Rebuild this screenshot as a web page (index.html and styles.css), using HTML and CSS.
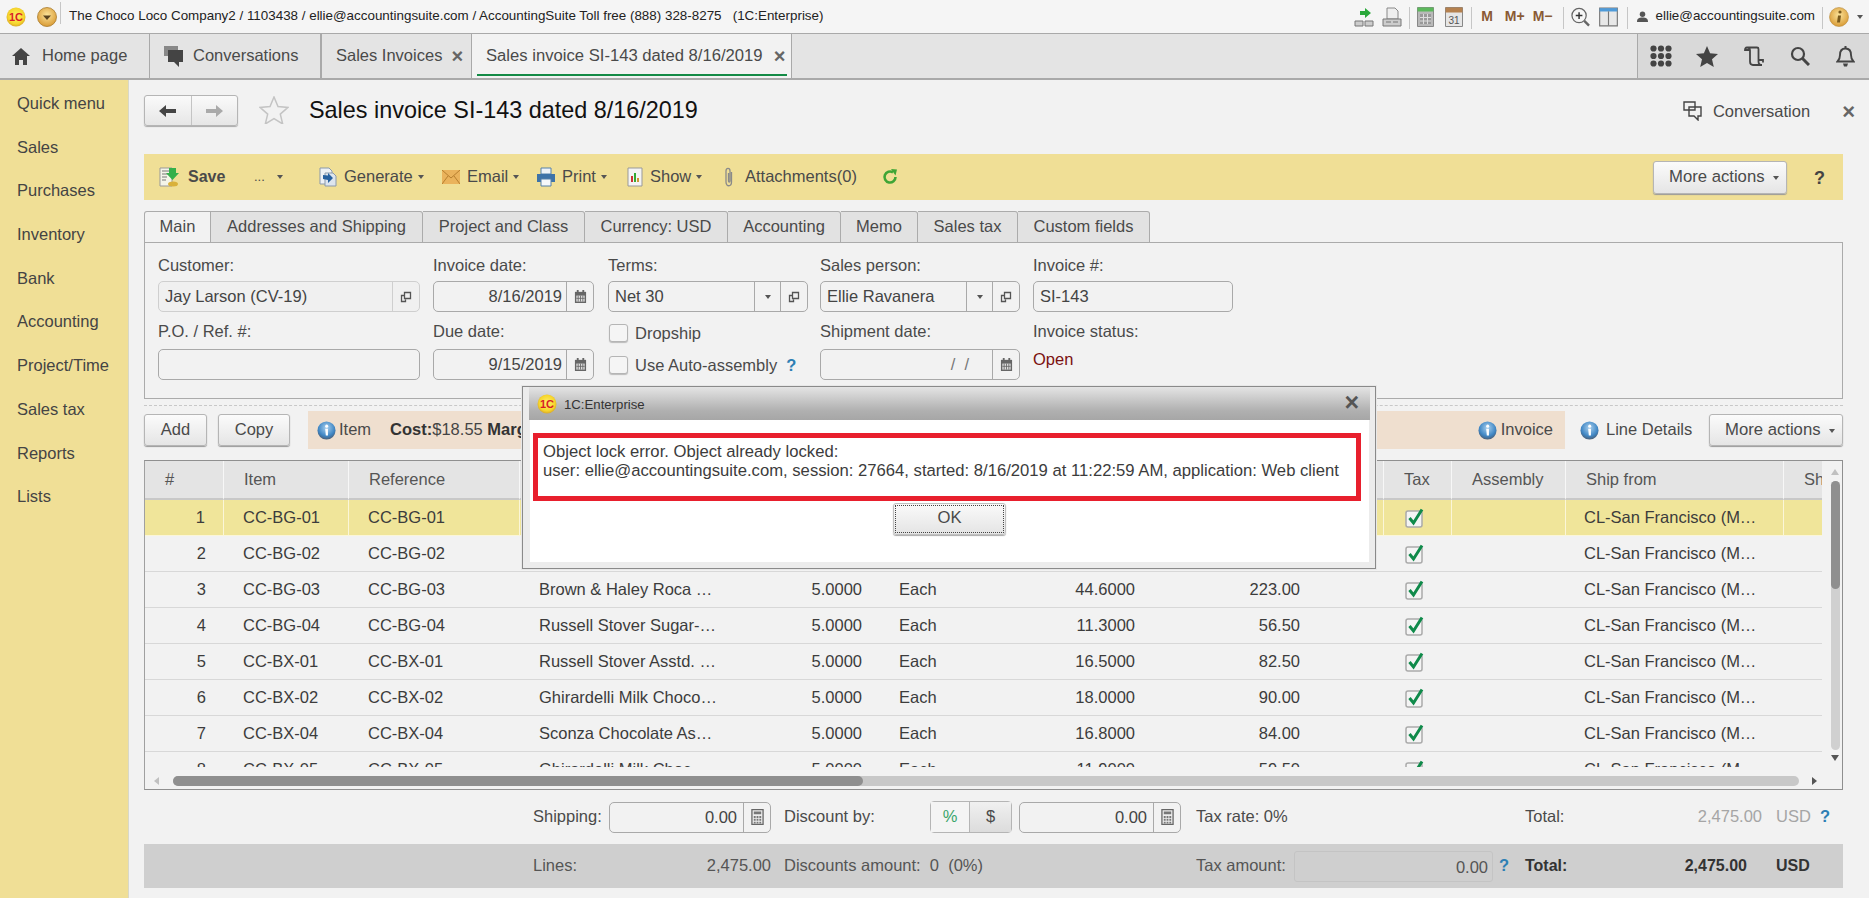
FILE: index.html
```html
<!DOCTYPE html>
<html lang="en">
<head>
<meta charset="utf-8">
<title>Sales invoice SI-143</title>
<link rel="stylesheet" href="styles.css">
</head>
<body>
<svg class="defs" width="0" height="0" aria-hidden="true">
  <defs>
    <radialGradient id="gy" cx="50%" cy="45%" r="55%"><stop offset="0" stop-color="#fff36a"/><stop offset="0.75" stop-color="#f6d52c"/><stop offset="1" stop-color="#d9a92a"/></radialGradient>
    <radialGradient id="gi" cx="50%" cy="35%" r="65%"><stop offset="0" stop-color="#a9d0ee"/><stop offset="0.7" stop-color="#3f86c4"/><stop offset="1" stop-color="#4a5f78"/></radialGradient>
    <radialGradient id="go" cx="50%" cy="40%" r="60%"><stop offset="0" stop-color="#fbe39a"/><stop offset="1" stop-color="#d99b35"/></radialGradient>
    <symbol id="info" viewBox="0 0 20 20"><circle cx="10" cy="10" r="9.5" fill="url(#gi)"/><circle cx="10.2" cy="5.4" r="1.6" fill="#fff"/><path d="M8.6 8.2h2.9v7h-2.2z" fill="#fff"/></symbol>
    <symbol id="ext" viewBox="0 0 12 12"><path d="M4.5 1.5h6v6h-6zM4 4.5H1.5v6h2.2M1.5 10.5h4v-2" fill="none" stroke="#555" stroke-width="1.3"/></symbol>
    <symbol id="cal" viewBox="0 0 14 16"><path d="M1 3h12v12H1z" fill="#666"/><path d="M3 1h2v3H3zM9 1h2v3H9z" fill="#666"/><path d="M2.5 7h9v6.500h-9z" fill="#ddd"/><path d="M4.500 7v6.500M7 7v6.500M9.500 7v6.500M2.500 10h9" stroke="#666" stroke-width=".9"/></symbol>
    <symbol id="calc" viewBox="0 0 14 18"><path d="M1 1h12v16H1z" fill="#eee" stroke="#666" stroke-width="1.400"/><path d="M3 3h8v3H3z" fill="#777"/><path d="M3 8h2v2H3zM6 8h2v2H6zM9 8h2v2H9zM3 11h2v2H3zM6 11h2v2H6zM9 11h2v2H9zM3 14h2v2H3zM6 14h2v2H6zM9 14h2v2H9z" fill="#777"/></symbol>
    <symbol id="chk" viewBox="0 0 20 20"><rect x="1" y="3" width="16" height="16" rx="2" fill="#f4f4f4" stroke="#aaa" stroke-width="1.500"/><path d="M4.500 10l4 5L17 1.500" fill="none" stroke="#0f8a4a" stroke-width="3"/></symbol>
  </defs>
</svg>

<div class="app">
  <header class="topbar">
    <svg class="logo" viewBox="0 0 20 20"><circle cx="10" cy="10" r="9.500" fill="url(#gy)"/><text x="10" y="13.800" class="logo-t">1C</text></svg>
    <svg class="sys" viewBox="0 0 20 20"><circle cx="10" cy="10" r="9.500" fill="url(#go)" stroke="#a97b2c" stroke-width=".8"/><path d="M6 8.500h8l-4 4.500z" fill="#5a4420"/></svg>
    <span class="tsep first"></span>
    <span class="top-title">The Choco Loco Company2 / 1103438 / ellie@accountingsuite.com / AccountingSuite Toll free (888) 328-8275 &nbsp; (1C:Enterprise)</span>
    <div class="top-tools">
      <svg class="ti ti-a" viewBox="0 0 20 20"><path d="M1 14h8v5H1zM11 14h8v5h-8z" fill="#ccc" stroke="#777"/><path d="M6 4h5V1l6 5-6 5V8H6z" fill="#2aa83a"/></svg>
      <svg class="ti ti-b" viewBox="0 0 20 20"><path d="M5 1h8l3 3v8H5z" fill="#eee" stroke="#888"/><path d="M1 12h18v7H1z" fill="#ccc" stroke="#777"/><path d="M4 15h5M11 15h5" stroke="#777"/></svg>
      <span class="tsep s1"></span>
      <svg class="ti ti-c" viewBox="0 0 17 20"><path d="M.5.500h16v19H.500z" fill="#b9b9b9" stroke="#888"/><path d="M.500.500h16v4H.500z" fill="#5cb85c"/><path d="M3 7h11v10H3z" fill="#999"/><path d="M6.500 7v10M10.500 7v10M3 10.500h11M3 14h11" stroke="#ddd"/></svg>
      <svg class="ti ti-d" viewBox="0 0 18 20"><path d="M.500.500h17v19H.500z" fill="#e6e6e6" stroke="#888"/><path d="M.500.500h17v5H.500z" fill="#b5814f"/><text x="9" y="16.500" class="cal-t">31</text></svg>
      <span class="tsep s2"></span>
      <span class="mem m0">M</span><span class="mem m1">M+</span><span class="mem m2">M−</span>
      <span class="tsep s3"></span>
      <svg class="ti ti-e" viewBox="0 0 20 20"><circle cx="8.500" cy="8.500" r="7.500" fill="#f6f6f6" stroke="#666" stroke-width="1.300"/><path d="M8.500 5v7M5 8.500h7" stroke="#333" stroke-width="1.500"/><path d="M14 14l5 5" stroke="#666" stroke-width="2.500"/></svg>
      <svg class="ti ti-f" viewBox="0 0 20 20"><path d="M.700.700h18.600v18.600H.700z" fill="#e8e8e8" stroke="#777" stroke-width="1.200"/><path d="M.700.700h18.600v3.500H.700z" fill="#4f9bd9"/><path d="M10 4v15" stroke="#777" stroke-width="1.200"/></svg>
      <span class="tsep s4"></span>
      <svg class="ti ti-g" viewBox="0 0 12 12"><circle cx="6" cy="3.500" r="3" fill="#555"/><path d="M0 12c0-4 2-5 6-5s6 1 6 5z" fill="#555"/></svg>
      <span class="top-user">ellie@accountingsuite.com</span>
      <span class="tsep s5"></span>
      <svg class="ti ti-h" viewBox="0 0 20 20"><circle cx="10" cy="10" r="9.500" fill="url(#go)" stroke="#b98b3c" stroke-width=".6"/><circle cx="11" cy="5" r="1.600" fill="#7a5a1c"/><path d="M9 8.500h3l-1 7H8z" fill="#7a5a1c"/></svg>
      <span class="caret ti-i"></span>
    </div>
  </header>

  <nav class="tabbar">
    <div class="wtab t-home">
      <svg class="wi-home" viewBox="0 0 18 17"><path d="M9 0L0 8h3v9h4v-5h4v5h4V8h3z" fill="#444"/></svg>
      <span>Home page</span>
    </div>
    <div class="wtab t-conv">
      <svg class="wi-conv" viewBox="0 0 19 21"><path d="M0 0h14v10H0z" fill="#888"/><path d="M4 4h15v12h-4v5l-5-5H4z" fill="#444"/></svg>
      <span>Conversations</span>
    </div>
    <div class="wtab t-list"><span>Sales Invoices</span><span class="x">×</span></div>
    <div class="wtab t-active"><span>Sales invoice SI-143 dated 8/16/2019</span><span class="x">×</span></div>
    <div class="tab-tools">
      <svg class="tt tt-grid" viewBox="0 0 22 22"><g fill="#444"><circle cx="3.500" cy="3.500" r="3.100"/><circle cx="11" cy="3.500" r="3.100"/><circle cx="18.500" cy="3.500" r="3.100"/><circle cx="3.500" cy="11" r="3.100"/><circle cx="11" cy="11" r="3.100"/><circle cx="18.500" cy="11" r="3.100"/><circle cx="3.500" cy="18.500" r="3.100"/><circle cx="11" cy="18.500" r="3.100"/><circle cx="18.500" cy="18.500" r="3.100"/></g></svg>
      <svg class="tt tt-star" viewBox="0 0 22 21"><path d="M11 0l3.100 7.300 7.900.7-6 5.200 1.800 7.800L11 16.900 4.200 21 6 13.200 0 8l7.900-.7z" fill="#444"/></svg>
      <svg class="tt tt-hist" viewBox="0 0 20 21"><path d="M3 1.500h10c.8 0 1.500.7 1.500 1.500v12.500c0 2 1 3.500 3.500 3.500H9c-2.500 0-3-1.500-3-3.500V4.500C6 2.500 4.500 1.500 3 1.500c-1.500 0-2 1-2 2.500h5M14.500 14H19v2.500" fill="none" stroke="#444" stroke-width="1.800"/></svg>
      <svg class="tt tt-find" viewBox="0 0 20 20"><circle cx="8" cy="8" r="6" fill="none" stroke="#444" stroke-width="2.200"/><path d="M12.500 12.500l6.500 6.500" stroke="#444" stroke-width="3"/></svg>
      <svg class="tt tt-bell" viewBox="0 0 19 21"><path d="M9.500 2.500c-4 0-5.500 3-5.500 6.500 0 3.500-1 5-2.500 6.500h16C16 14 15 12.500 15 9c0-3.500-1.500-6.500-5.500-6.500z" fill="none" stroke="#444" stroke-width="1.900"/><path d="M7 17.500h5l-1 3H8zM8.500 0h2v3h-2z" fill="#444"/></svg>
    </div>
  </nav>

  <div class="main">
    <aside class="sidebar">
      <a>Quick menu</a><a>Sales</a><a>Purchases</a><a>Inventory</a><a>Bank</a><a>Accounting</a><a>Project/Time</a><a>Sales tax</a><a>Reports</a><a>Lists</a>
    </aside>

    <section class="content">
      <div class="head">
        <div class="navbtns">
          <span class="nb"><svg viewBox="0 0 18 14"><path d="M0 7l7-6v4h10v4H7v4z" fill="#444"/></svg></span>
          <span class="nb"><svg viewBox="0 0 18 14"><path d="M18 7l-7-6v4H1v4h10v4z" fill="#aaa"/></svg></span>
        </div>
        <svg class="fav" viewBox="0 0 30 28"><path d="M15 1l4 9.500 10 .9-7.700 6.700 2.400 9.900L15 22.700 6.300 28l2.400-9.900L1 11.400l10-.9z" fill="none" stroke="#c4c4c4" stroke-width="1.500"/></svg>
        <h1>Sales invoice SI-143 dated 8/16/2019</h1>
        <div class="conv">
          <svg viewBox="0 0 19 20"><path d="M1 1h11v8H1zM6 6h12v9h-3v4l-4-4H6z" fill="#f2f2f2" stroke="#444" stroke-width="1.400"/></svg>
          <span>Conversation</span>
        </div>
        <span class="head-x">×</span>
      </div>

      <div class="toolbar">
        <div class="tb">
          <svg class="ic20" viewBox="0 0 20 20"><path d="M1 1h12v18H1z" fill="#f4f4e8" stroke="#999"/><path d="M3 4h7M3 7h6M3 10h5M3 13h4" stroke="#777"/><ellipse cx="14" cy="17" rx="5" ry="2.500" fill="#d9b13a"/><path d="M10 1h7v5h3l-6.500 7L7 6h3z" fill="#35b04a"/></svg>
          <b class="save">Save</b>
        </div>
        <div class="tb dots"><span>...</span><span class="caret c-dots"></span></div>
        <div class="tb">
          <svg class="ic18" viewBox="0 0 18 20"><path d="M1 1h9l3 3v13H1z" fill="#eef1f5" stroke="#8a99ab"/><path d="M6 6h8l3 3v10H6z" fill="#dde5ee" stroke="#8a99ab"/><path d="M4 8l5 .5L9 6l5 5-5 5v-3l-5-1z" fill="#26609f"/></svg>
          <span>Generate</span><span class="caret"></span>
        </div>
        <div class="tb">
          <svg class="ic18 env" viewBox="0 0 18 14"><path d="M0 0h18v14H0z" fill="#eab35c"/><path d="M0 0l9 8 9-8M0 14l6-8M18 14l-6-8" fill="none" stroke="#b67f2f"/></svg>
          <span>Email</span><span class="caret"></span>
        </div>
        <div class="tb">
          <svg class="ic18" viewBox="0 0 18 18"><path d="M4 0h10v6H4z" fill="#eef3f8" stroke="#5580a8"/><path d="M0 6h18v8H0z" fill="#3e73a8"/><path d="M4 11h10v7H4z" fill="#f6f8fa" stroke="#5580a8"/></svg>
          <span>Print</span><span class="caret"></span>
        </div>
        <div class="tb">
          <svg class="ic16" viewBox="0 0 16 20"><path d="M1 1h14v18H1z" fill="#f4f4f4" stroke="#999"/><path d="M4 9h2v6H4z" fill="#c33"/><path d="M7 6h2v9H7z" fill="#3a3"/><path d="M10 11h2v4h-2z" fill="#c93"/></svg>
          <span>Show</span><span class="caret"></span>
        </div>
        <div class="tb tb-att">
          <svg class="clip" viewBox="0 0 10 20"><path d="M7.500 5v10c0 5-5.500 5-5.500 0V4c0-3.500 4-3.500 4 0v10c0 1.500-1.500 1.500-1.500 0V6" fill="none" stroke="#8a8a8a" stroke-width="1.300"/></svg>
          <span>Attachments(0)</span>
        </div>
        <svg class="refresh" viewBox="0 0 16 16"><path d="M13.500 8A5.500 5.500 0 1 1 11 3.400" fill="none" stroke="#3fa535" stroke-width="2.600"/><path d="M9 0l6 .5-1.500 6z" fill="#3fa535"/></svg>
        <button class="btn more more-top">More actions<span class="caret"></span></button>
        <span class="help-dark">?</span>
      </div>

      <div class="tabs">
        <span class="tab on w-main">Main</span>
        <span class="tab w-addr">Addresses and Shipping</span>
        <span class="tab w-proj">Project and Class</span>
        <span class="tab w-curr">Currency: USD</span>
        <span class="tab w-acct">Accounting</span>
        <span class="tab w-memo">Memo</span>
        <span class="tab w-stax">Sales tax</span>
        <span class="tab w-cust">Custom fields</span>
      </div>

      <div class="panel">
        <label>Customer:</label><label>Invoice date:</label><label>Terms:</label><label>Sales person:</label><label>Invoice #:</label>

        <div class="f w262 muted"><span class="v">Jay Larson (CV-19)</span><span class="seg s27"><svg class="i12" viewBox="0 0 12 12"><use href="#ext"/></svg></span></div>
        <div class="f w161"><span class="v r">8/16/2019</span><span class="seg s27"><svg class="i13" viewBox="0 0 14 16"><use href="#cal"/></svg></span></div>
        <div class="f w200"><span class="v">Net 30</span><span class="seg s26"><span class="caret"></span></span><span class="seg s27"><svg class="i12" viewBox="0 0 12 12"><use href="#ext"/></svg></span></div>
        <div class="f w200"><span class="v">Ellie Ravanera</span><span class="seg s26"><span class="caret"></span></span><span class="seg s27"><svg class="i12" viewBox="0 0 12 12"><use href="#ext"/></svg></span></div>
        <div class="f w200"><span class="v">SI-143</span></div>

        <label class="low">P.O. / Ref. #:</label><label class="low">Due date:</label>
        <div class="ck ck1"><span class="box"></span><span>Dropship</span></div>
        <label class="low">Shipment date:</label><label class="low">Invoice status:</label>

        <div class="f w262"><span class="v"></span></div>
        <div class="f w161"><span class="v r">9/15/2019</span><span class="seg s27"><svg class="i13" viewBox="0 0 14 16"><use href="#cal"/></svg></span></div>
        <div class="ck ck2"><span class="box"></span><span>Use Auto-assembly</span><span class="help">?</span></div>
        <div class="f w200"><span class="v r slashes">/ &nbsp;/</span><span class="seg s27"><svg class="i13" viewBox="0 0 14 16"><use href="#cal"/></svg></span></div>
        <span class="status">Open</span>
      </div>

      <div class="dash"></div>

      <div class="actions">
        <button class="btn b-add">Add</button>
        <button class="btn b-copy">Copy</button>
        <div class="beige">
          <svg class="i19" viewBox="0 0 20 20"><use href="#info"/></svg>
          <span class="lbl-item">Item</span>
          <span class="cost"><b>Cost:</b>$18.55 <b>Margin:</b></span>
          <svg class="i19 push" viewBox="0 0 20 20"><use href="#info"/></svg>
          <span class="lbl-inv">Invoice</span>
        </div>
        <svg class="i19 ld" viewBox="0 0 20 20"><use href="#info"/></svg>
        <span class="ld-t">Line Details</span>
        <button class="btn more more-act">More actions<span class="caret"></span></button>
      </div>

      <div class="grid">
        <div class="grid-top">
          <div class="grid-clip">
            <table>
              <colgroup><col class="c1"><col class="c2"><col class="c3"><col class="c4"><col class="c5"><col class="c6"><col class="c7"><col class="c8"><col class="c9"><col class="c10"><col class="c11"><col class="c12"><col class="c13"></colgroup>
              <thead><tr><th class="num-h">#</th><th>Item</th><th>Reference</th><th></th><th></th><th></th><th></th><th></th><th></th><th class="ctr">Tax</th><th>Assembly</th><th>Ship from</th><th>Sh</th></tr></thead>
              <tbody>
                <tr class="sel"><td class="n">1</td><td>CC-BG-01</td><td>CC-BG-01</td><td></td><td class="q"></td><td></td><td class="p"></td><td class="a"></td><td></td><td class="tx"><svg class="i20" viewBox="0 0 20 20"><use href="#chk"/></svg></td><td></td><td class="ship">CL-San Francisco (M…</td><td></td></tr>
                <tr><td class="n">2</td><td>CC-BG-02</td><td>CC-BG-02</td><td></td><td class="q"></td><td></td><td class="p"></td><td class="a"></td><td></td><td class="tx"><svg class="i20" viewBox="0 0 20 20"><use href="#chk"/></svg></td><td></td><td class="ship">CL-San Francisco (M…</td><td></td></tr>
                <tr><td class="n">3</td><td>CC-BG-03</td><td>CC-BG-03</td><td>Brown &amp; Haley Roca …</td><td class="q">5.0000</td><td>Each</td><td class="p">44.6000</td><td class="a">223.00</td><td></td><td class="tx"><svg class="i20" viewBox="0 0 20 20"><use href="#chk"/></svg></td><td></td><td class="ship">CL-San Francisco (M…</td><td></td></tr>
                <tr><td class="n">4</td><td>CC-BG-04</td><td>CC-BG-04</td><td>Russell Stover Sugar-…</td><td class="q">5.0000</td><td>Each</td><td class="p">11.3000</td><td class="a">56.50</td><td></td><td class="tx"><svg class="i20" viewBox="0 0 20 20"><use href="#chk"/></svg></td><td></td><td class="ship">CL-San Francisco (M…</td><td></td></tr>
                <tr><td class="n">5</td><td>CC-BX-01</td><td>CC-BX-01</td><td>Russell Stover Asstd. …</td><td class="q">5.0000</td><td>Each</td><td class="p">16.5000</td><td class="a">82.50</td><td></td><td class="tx"><svg class="i20" viewBox="0 0 20 20"><use href="#chk"/></svg></td><td></td><td class="ship">CL-San Francisco (M…</td><td></td></tr>
                <tr><td class="n">6</td><td>CC-BX-02</td><td>CC-BX-02</td><td>Ghirardelli Milk Choco…</td><td class="q">5.0000</td><td>Each</td><td class="p">18.0000</td><td class="a">90.00</td><td></td><td class="tx"><svg class="i20" viewBox="0 0 20 20"><use href="#chk"/></svg></td><td></td><td class="ship">CL-San Francisco (M…</td><td></td></tr>
                <tr><td class="n">7</td><td>CC-BX-04</td><td>CC-BX-04</td><td>Sconza Chocolate As…</td><td class="q">5.0000</td><td>Each</td><td class="p">16.8000</td><td class="a">84.00</td><td></td><td class="tx"><svg class="i20" viewBox="0 0 20 20"><use href="#chk"/></svg></td><td></td><td class="ship">CL-San Francisco (M…</td><td></td></tr>
                <tr><td class="n">8</td><td>CC-BX-05</td><td>CC-BX-05</td><td>Ghirardelli Milk Choc…</td><td class="q">5.0000</td><td>Each</td><td class="p">11.9000</td><td class="a">59.50</td><td></td><td class="tx"><svg class="i20" viewBox="0 0 20 20"><use href="#chk"/></svg></td><td></td><td class="ship">CL-San Francisco (M…</td><td></td></tr>
              </tbody>
            </table>
          </div>
          <div class="vbar">
            <span class="arr up"></span>
            <div class="vtrack"><div class="vthumb"></div></div>
            <span class="arr down"></span>
          </div>
        </div>
        <div class="hbar">
          <span class="arr left"></span>
          <div class="htrack"><div class="hthumb"></div></div>
          <span class="arr right"></span>
        </div>
      </div>

      <div class="totals1">
        <span>Shipping:</span>
        <div class="f"><span class="v r">0.00</span><span class="seg s27"><svg class="i13 c" viewBox="0 0 14 18"><use href="#calc"/></svg></span></div>
        <span></span>
        <span>Discount by:</span>
        <div class="toggle"><span class="pct">%</span><span class="usd">$</span></div>
        <span></span>
        <div class="f"><span class="v r">0.00</span><span class="seg s27"><svg class="i13 c" viewBox="0 0 14 18"><use href="#calc"/></svg></span></div>
        <span></span>
        <span>Tax rate: 0%</span>
        <span>Total:</span>
        <span class="r dim">2,475.00</span>
        <span></span>
        <span class="dim">USD</span>
        <span class="help">?</span>
      </div>

      <div class="totals2">
        <span>Lines:</span>
        <span class="r">2,475.00</span>
        <span></span>
        <span>Discounts amount: &nbsp;0 &nbsp;(0%)</span>
        <span>Tax amount:</span>
        <span class="taxbox">0.00</span>
        <span class="help">?</span>
        <b>Total:</b>
        <b class="r">2,475.00</b>
        <span></span>
        <b>USD</b>
      </div>
    </section>
  </div>

  <div class="dialog">
    <div class="dlg-head">
      <svg class="dlg-logo" viewBox="0 0 20 20"><circle cx="10" cy="10" r="9.500" fill="url(#gy)"/><text x="10" y="13.800" class="logo-t">1C</text></svg>
      <span class="dlg-title">1C:Enterprise</span>
      <span class="dlg-x">×</span>
    </div>
    <div class="dlg-body">
      <div class="dlg-msg">Object lock error. Object already locked:<br>user: ellie@accountingsuite.com, session: 27664, started: 8/16/2019 at 11:22:59 AM, application: Web client</div>
      <button class="dlg-ok"><span>OK</span></button>
    </div>
  </div>
</div>
</body>
</html>
```
FILE: styles.css
```css
* { box-sizing: border-box; }
html, body { margin: 0; padding: 0; }
body {
  width: 1869px; height: 898px; overflow: hidden;
  background: #f2f2f2; color: #4a4a4a;
  font: 16.5px/1.2 "Liberation Sans", Arial, sans-serif;
}
.defs { position: absolute; }
.app { position: relative; width: 1869px; height: 898px; display: flex; flex-direction: column; }

.caret { display: inline-block; width: 0; height: 0; border: 3.5px solid transparent; border-top: 4px solid #555; border-bottom: 0; margin-left: 5px; }

/* Top strip */
.topbar { height: 34px; flex: none; display: flex; align-items: center; background: #f5f5f5; border-bottom: 1px solid #a9a9a9; font-size: 13.4px; color: #222; }
.logo { width: 20px; height: 20px; margin-left: 6px; flex: none; }
.logo-t { font: bold 11px "Liberation Sans", sans-serif; fill: #d81e26; text-anchor: middle; }
.sys { width: 20px; height: 20px; margin-left: 11px; flex: none; }
.tsep { width: 1px; height: 22px; background: #c6c6c6; flex: none; align-self: flex-start; margin-top: 2px; }
.tsep.first { margin-left: 3px; }
.top-title { margin-left: 8px; white-space: nowrap; }
.top-tools { margin-left: auto; display: flex; align-items: center; padding-right: 6px; }
.ti { flex: none; height: 20px; }
.ti-a { width: 20px; }
.ti-b { width: 20px; margin-left: 8px; }
.s1 { margin-left: 7px; }
.ti-c { width: 17px; margin-left: 7px; }
.ti-d { width: 18px; margin-left: 11px; }
.cal-t { font: 10px "Liberation Sans", sans-serif; fill: #555; text-anchor: middle; }
.s2 { margin-left: 8px; }
.mem { font-weight: bold; color: #8a5a34; font-size: 14px; }
.m0 { margin-left: 9px; }
.m1 { margin-left: 12px; }
.m2 { margin-left: 8px; }
.s3 { margin-left: 10px; }
.ti-e { width: 19px; margin-left: 7px; }
.ti-f { width: 19px; margin-left: 9px; }
.s4 { margin-left: 9px; }
.ti-g { width: 11px; height: 11px; margin-left: 9px; }
.top-user { margin-left: 8px; }
.s5 { margin-left: 7px; }
.ti-h { width: 20px; margin-left: 6px; }
.ti-i { margin-left: 8px; }

/* Window tabs */
.tabbar { height: 46px; flex: none; display: flex; background: #e4e4e4; border-bottom: 2px solid #a9a9a9; }
.wtab { display: flex; align-items: center; height: 44px; flex: none; white-space: nowrap; border-right: 1px solid #a9a9a9; }
.t-home { width: 150px; padding-left: 12px; gap: 12px; }
.wi-home { width: 18px; height: 17px; }
.t-conv { width: 172px; padding-left: 14px; gap: 10px; border-right-width: 2px; }
.wi-conv { width: 19px; height: 21px; }
.t-list { width: 150px; padding-left: 14px; }
.t-list .x { margin-left: 9px; }
.t-active { width: 320px; padding-left: 14px; font-size: 16.65px; background: #f2f2f2; position: relative; }
.t-active::after { content: ""; position: absolute; left: 5px; right: 4px; bottom: 2px; height: 2px; background: #138a45; }
.t-active .x { margin-left: 11px; }
.x { font-size: 20px; font-weight: bold; color: #666; line-height: 1; }
.tab-tools { margin-left: auto; width: 232px; height: 44px; background: #d9d9d9; border-left: 1px solid #a9a9a9; display: flex; align-items: center; padding-left: 12px; }
.tt { flex: none; }
.tt-grid { width: 22px; height: 22px; }
.tt-star { width: 22px; height: 21px; margin-left: 24px; }
.tt-hist { width: 20px; height: 21px; margin-left: 26px; }
.tt-find { width: 20px; height: 20px; margin-left: 26px; }
.tt-bell { width: 19px; height: 21px; margin-left: 26px; }

/* Layout */
.main { flex: 1; display: flex; min-height: 0; }
.sidebar { width: 129px; flex: none; background: #f0df96; border-right: 1px solid #d8d8c8; padding-top: 2px; display: flex; flex-direction: column; }
.sidebar a { height: 43.7px; line-height: 43.7px; padding-left: 17px; color: #444; }
.content { flex: 1; padding: 0 26px 0 15px; display: flex; flex-direction: column; min-width: 0; }

/* Head */
.head { height: 74px; flex: none; display: flex; align-items: flex-start; padding-top: 15px; margin-right: -12px; }
.navbtns { width: 94px; height: 31px; display: flex; border: 1px solid #b5b5b5; border-radius: 3px; background: linear-gradient(#fafafa, #e6e6e6); box-shadow: 0 1px 1px #aaa; }
.nb { flex: 1; display: flex; align-items: center; justify-content: center; }
.nb + .nb { border-left: 1px solid #c4c4c4; }
.nb svg { width: 18px; height: 14px; }
.fav { width: 30px; height: 28px; margin: 1px 0 0 21px; flex: none; }
h1 { margin: 0 0 0 20px; font-size: 23.4px; font-weight: normal; color: #111; line-height: 31px; white-space: nowrap; }
.conv { margin-left: auto; display: flex; align-items: center; gap: 11px; margin-top: 6px; line-height: 20px; }
.conv svg { width: 19px; height: 20px; }
.head-x { margin: 6px 0 0 32px; font-size: 22px; font-weight: bold; color: #666; line-height: 1; }

/* Toolbar */
.toolbar { height: 46px; flex: none; background: #f0df96; padding: 0 16px 0 15px; display: grid; grid-template-columns: 95px 65px 123px 95px 90px 97px 158px 16px 1fr auto auto; align-items: center; }
.tb { display: flex; align-items: center; white-space: nowrap; }
.tb .caret { margin-left: 5px; }
.ic20 { width: 20px; height: 20px; margin-right: 9px; }
.ic18 { width: 18px; height: 20px; margin-right: 7px; }
.ic18.env { height: 14px; }
.ic16 { width: 16px; height: 20px; margin-right: 7px; }
.clip { width: 10px; height: 20px; margin-right: 11px; }
.save { font-size: 16px; }
.dots { font-size: 13px; }
.c-dots { margin-left: 12px !important; }
.refresh { width: 16px; height: 16px; }
.btn { font: inherit; color: #4a4a4a; border: 1px solid #b5b5b5; border-radius: 3px; background: linear-gradient(#fbfbfb, #e5e5e5); box-shadow: 0 1px 1px #999; height: 32px; padding: 0; white-space: nowrap; }
.more { font-size: 16.7px; text-align: left; padding-left: 15px; }
.more .caret { margin-left: 8px; vertical-align: middle; }
.more-top { grid-column: 10; width: 134px; height: 33px; }
.help-dark { grid-column: 11; font-weight: bold; font-size: 18px; margin: 3px 2px 0 27px; color: #444; }

/* Form tabs */
.tabs { height: 32px; margin-top: 11px; flex: none; display: flex; }
.tab { height: 32px; border: 1px solid #ababab; border-left-width: 0; border-radius: 0 3px 0 0; background: #e2e2e2; display: flex; align-items: center; justify-content: center; white-space: nowrap; flex: none; }
.tab.on { background: #f2f2f2; border-left-width: 1px; border-bottom-color: #f2f2f2; border-radius: 3px 0 0 0; }
.w-main { width: 67px; }
.w-addr { width: 212px; }
.w-proj { width: 162px; }
.w-curr { width: 143px; }
.w-acct { width: 113px; }
.w-memo { width: 77px; }
.w-stax { width: 100px; }
.w-cust { width: 132px; }

.panel { height: 157px; flex: none; margin-top: -1px; border: 1px solid #ababab; padding-left: 13px;
  display: grid; grid-template-columns: 275px 175px 212px 213px 1fr; grid-template-rows: 38px 31px 37px 31px; align-items: center; }
.panel label { padding-top: 8px; }
.panel label.low { padding-top: 3px; }
.f { height: 31px; display: flex; border: 1px solid #a9a9a9; border-radius: 5px; color: #444; }
.f.muted { border-color: #cfcfcf; background: #f0f0f0; }
.w262 { width: 262px; }
.w161 { width: 161px; }
.w200 { width: 200px; }
.v { flex: 1; min-width: 0; line-height: 29px; padding: 0 6px; white-space: nowrap; }
.v.r { text-align: right; padding: 0 4px 0 0; }
.slashes { padding-right: 23px !important; color: #777; }
.seg { border-left: 1px solid #a9a9a9; display: flex; align-items: center; justify-content: center; flex: none; }
.muted .seg { border-color: #cfcfcf; }
.s26 { width: 26px; }
.s26 .caret { margin: 0; }
.s27 { width: 27px; }
.i12 { width: 12px; height: 12px; }
.i13 { width: 13px; height: 15px; }
.i13.c { height: 18px; }
.i19 { width: 19px; height: 19px; flex: none; }
.i20 { width: 20px; height: 20px; display: block; }
.ck { display: flex; align-items: center; white-space: nowrap; }
.ck1 { padding-top: 6px; }
.ck2 { padding-top: 2px; }
.box { width: 19px; height: 18px; border: 1px solid #b5b5b5; border-radius: 3px; background: #f5f5f5; box-shadow: 0 1px 1px #bbb; margin: 0 7px 0 1px; }
.help { color: #2e7fb4; font-weight: bold; }
.ck .help { margin-left: 9px; }
.status { color: #7b1010; align-self: start; margin-top: 1px; }

.dash { height: 1px; flex: none; margin-top: 6px; border-top: 1px dashed #c8c8c8; }

/* Actions */
.actions { height: 38px; margin-top: 5px; flex: none; display: flex; align-items: center; }
.b-add { width: 63px; flex: none; }
.b-copy { width: 72px; margin-left: 11px; flex: none; }
.beige { width: 1257px; height: 38px; margin-left: 18px; flex: none; background: #efdfcf; display: flex; align-items: center; padding: 0 12px 0 9px; white-space: nowrap; overflow: hidden; }
.lbl-item { margin-left: 3px; }
.cost { margin-left: 19px; color: #444; }
.cost b { color: #333; }
.push { margin-left: auto; }
.lbl-inv { margin-left: 4px; }
.ld { margin-left: 15px; }
.ld-t { margin-left: 7px; white-space: nowrap; }
.more-act { width: 134px; margin-left: auto; flex: none; }

/* Grid */
.grid { height: 330px; margin-top: 11px; flex: none; border: 1px solid #8f8f8f; border-left-color: #a0a0a0; display: flex; flex-direction: column; }
.grid-top { height: 306px; display: flex; flex: none; }
.grid-clip { width: 1677px; overflow: hidden; flex: none; }
table { border-collapse: separate; border-spacing: 0; table-layout: fixed; width: 1719px; }
.c1 { width: 79px; } .c2 { width: 125px; } .c3 { width: 171px; } .c4 { width: 271px; }
.c5 { width: 90px; } .c6 { width: 120px; } .c7 { width: 150px; } .c8 { width: 170px; }
.c9 { width: 63px; } .c10 { width: 68px; } .c11 { width: 114px; } .c12 { width: 218px; } .c13 { width: 80px; }
th { height: 39px; background: #e4e4e4; font-weight: normal; text-align: left; padding: 0 0 0 20px; border-right: 1px solid #f7f7f7; border-bottom: 2px solid #c8c8c8; color: #555; white-space: nowrap; overflow: hidden; }
th.ctr { padding-left: 20px; }
td { height: 36px; padding: 0 0 0 19px; border-bottom: 1px solid #d8d8d8; color: #3c3c3c; white-space: nowrap; overflow: hidden; }
tbody tr.sel td { background: #f0e59a; border-right: 1px solid #fbf6d8; border-bottom-color: #fbf6d8; }
td.n { text-align: right; padding: 0 18px 0 0; }
td.q { text-align: right; padding: 0 19px 0 0; }
td.p { text-align: right; padding: 0 16px 0 0; }
td.a { text-align: right; padding: 0 21px 0 0; }
td:nth-child(6) { padding-left: 18px; }
td.tx { padding-left: 21px; }
td.ship { padding-left: 18px; overflow: visible; }
.vbar { flex: 1; display: flex; flex-direction: column; align-items: center; padding: 8px 0 6px 6px; }
.vtrack { flex: 1; width: 9px; margin: 6px 0 5px; border-radius: 5px; background: #d0d0d0; min-height: 0; }
.vthumb { height: 108px; border-radius: 5px; background: #8f8f8f; }
.arr { width: 0; height: 0; border: 4px solid transparent; flex: none; }
.arr.up { border-top: 0; border-bottom: 6px solid #c0c0c0; }
.arr.down { border-bottom: 0; border-top: 6px solid #555; }
.hbar { flex: 1; display: flex; align-items: center; padding: 8px 25px 3px 9px; }
.htrack { flex: 1; height: 10px; margin: 0 13px 0 14px; border-radius: 5px; background: #c8c8c8; }
.hthumb { width: 690px; height: 10px; border-radius: 5px; background: #8f8f8f; }
.arr.left { border-left: 0; border-right: 5px solid #c0c0c0; }
.arr.right { border-right: 0; border-left: 5px solid #555; }

/* Totals */
.totals1 { height: 31px; margin-top: 11px; flex: none; padding-left: 389px; display: grid; align-items: center; white-space: nowrap;
  grid-template-columns: 76px 162px 13px 146px 82px 7px 162px 15px 329px 75px 162px 14px 44px auto; }
.totals1 .f .v.r { padding-right: 6px; }
.r { text-align: right; }
.dim { color: #a5a5a5; }
.toggle { height: 32px; display: flex; border: 1px solid #b5b5b5; border-radius: 4px; }
.pct, .usd { display: flex; align-items: center; justify-content: center; }
.pct { width: 39px; color: #3aa56a; background: #f4f4f4; border-right: 1px solid #b5b5b5; }
.usd { flex: 1; background: linear-gradient(#f0f0f0, #dcdcdc); }
.totals2 { height: 44px; margin-top: 12px; flex: none; padding-left: 389px; background: #cfcfcf; display: grid; align-items: center; white-space: nowrap; color: #555;
  grid-template-columns: 76px 162px 13px 412px 98px 199px 32px 75px 147px 29px 50px; }
.totals2 b { color: #333; font-size: 16px; }
.taxbox { height: 31px; line-height: 31px; border: 1px solid #c4c4c4; border-radius: 3px; text-align: right; padding-right: 4px; }
.totals2 .help { padding-left: 6px; }

/* Dialog (overlay) */
.dialog { position: absolute; left: 522px; top: 386px; width: 854px; height: 183px; background: #ececec; border: 1px solid #8a8a8a; box-shadow: 0 0 0 1px #e8e8e8; padding: 0 6px 6px 7px; display: flex; flex-direction: column; font-size: 16.67px; }
.dlg-head { height: 33px; flex: none; margin: 0 -1px; display: flex; align-items: center; padding-left: 8px; font-size: 13.2px; color: #333; background: linear-gradient(#e4e4e4 0, #b0b0b0 72%, #a6a6a6 100%); }
.dlg-logo { width: 20px; height: 20px; margin-right: 7px; }
.dlg-title { padding-top: 3px; }
.dlg-x { margin: -3px 11px 0 auto; font-size: 25px; font-weight: bold; color: #555; line-height: 1; }
.dlg-body { flex: 1; background: #fff; padding: 13px 8px 0 3px; display: flex; flex-direction: column; align-items: center; }
.dlg-msg { width: 828px; height: 68px; border: 5px solid #e81f2d; padding: 4px 5px 0 5px; line-height: 19px; color: #3c3c3c; white-space: nowrap; }
.dlg-ok { width: 113px; height: 32px; margin: 2px 0 0 5px; font: inherit; color: #4a4a4a; padding: 1px; border: 1px solid #c0c0c0; border-radius: 3px; background: linear-gradient(#fafafa, #e4e4e4); box-shadow: 0 1px 1px #aaa; }
.dlg-ok span { display: block; height: 100%; line-height: 24px; border: 1px dotted #444; }
```
